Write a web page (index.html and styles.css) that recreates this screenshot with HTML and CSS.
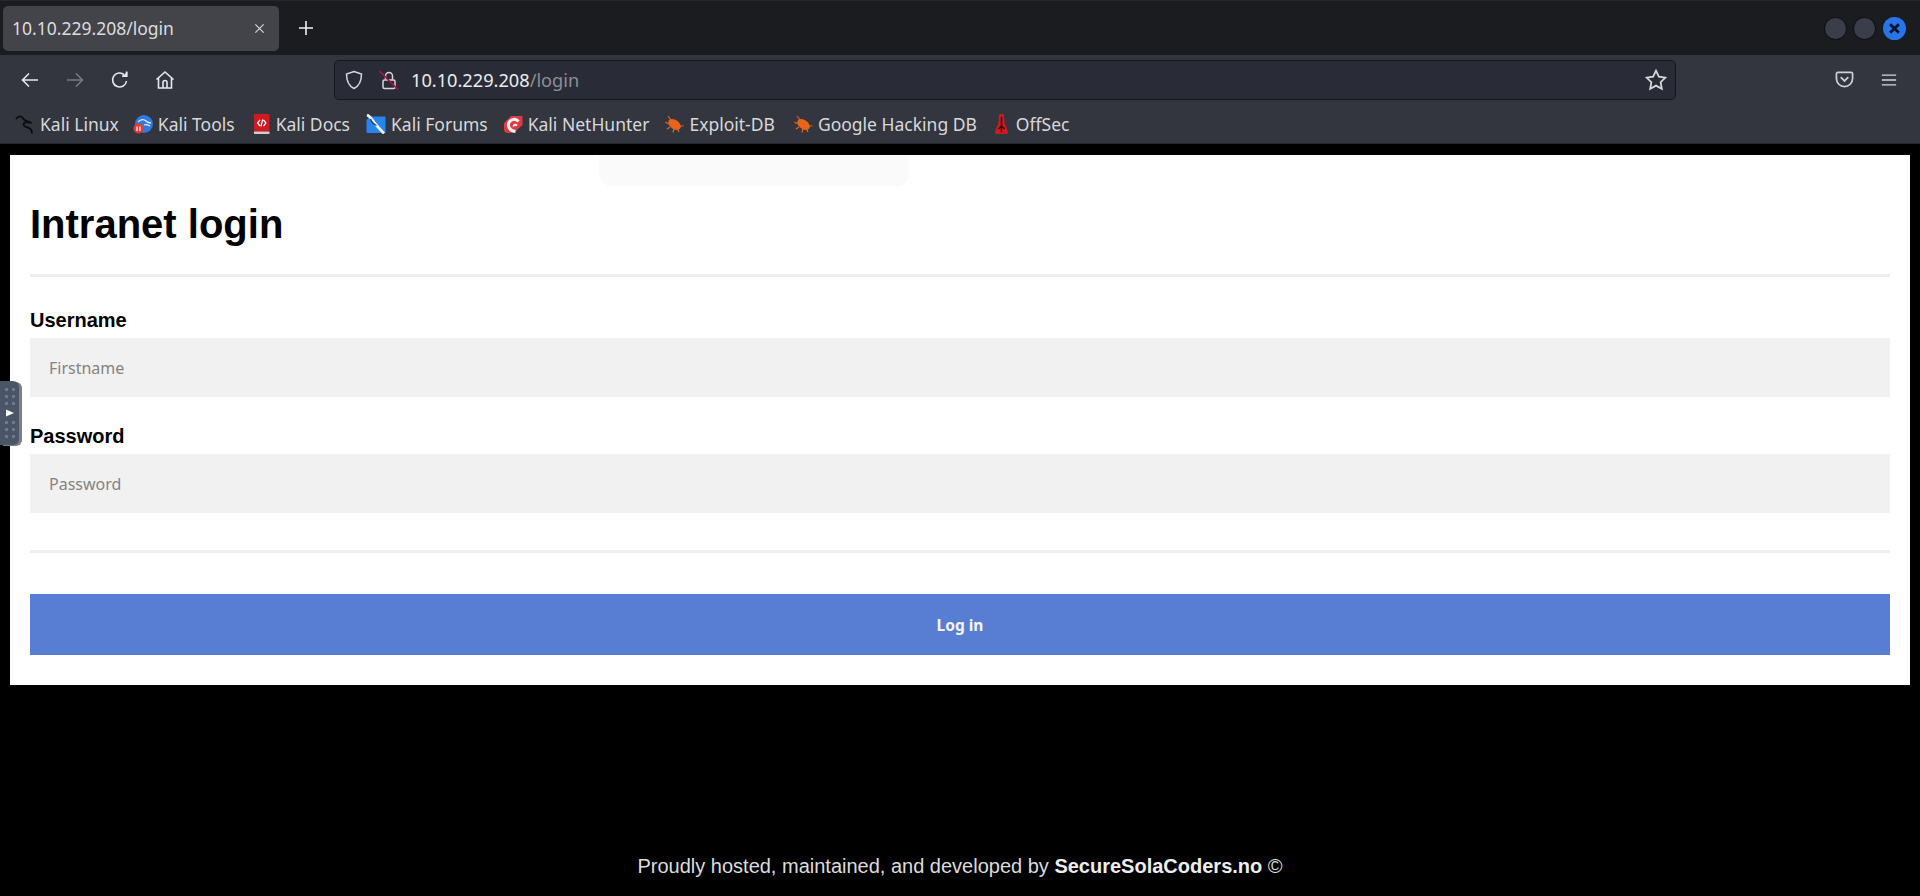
FILE: index.html
```html
<!DOCTYPE html>
<html lang="en">
<head>
<meta charset="utf-8">
<title>10.10.229.208/login</title>
<link rel="stylesheet" href="styles.css">
</head>
<body>
<header class="browser">
  <div class="tabbar">
    <div class="tab">
      <span class="tab-title">10.10.229.208/login</span>
      <svg class="tab-close" viewBox="0 0 12 12"><path d="M1.500 1.500l9 9M10.500 1.500l-9 9"/></svg>
    </div>
    <svg class="new-tab" viewBox="0 0 16 16"><path d="M8 1v14M1 8h14"/></svg>
    <div class="window-controls">
      <span class="win-btn"></span>
      <span class="win-btn"></span>
      <span class="win-btn win-close"><svg viewBox="0 0 12 12"><path d="M2 2l8 8M10 2l-8 8"/></svg></span>
    </div>
  </div>
  <div class="toolbar">
    <div class="nav">
      <svg class="nav-icon" viewBox="0 0 20 20"><path d="M18 10H3M9 3.500L2.500 10 9 16.500"/></svg>
      <svg class="nav-icon dim" viewBox="0 0 20 20"><path d="M2 10h15M11 3.500l6.500 6.500-6.500 6.500"/></svg>
      <svg class="nav-icon" viewBox="0 0 20 20"><path d="M16.500 11a7 7 0 1 1-2.300-6.300M16.500 1.500v4.500H12"/><path class="solid" d="M17.500 1.500v5.500H12z"/></svg>
      <svg class="nav-icon" viewBox="0 0 20 20"><path d="M1.500 9.500L10 2l8.500 7.500M3.500 8v10h13V8M8 18v-5.500a2 2 0 0 1 4 0V18"/></svg>
    </div>
    <div class="urlbar">
      <svg class="shield" viewBox="0 0 20 20"><path d="M10 1.500l7.500 2.500c0 7-1.500 11.500-7.500 14.500C4 15.500 2.500 11 2.500 4z"/></svg>
      <svg class="lock" viewBox="0 0 20 20"><path d="M6.500 9.500V6a3.500 3.500 0 0 1 7 0v3.500"/><rect x="4" y="10" width="12" height="8.500" rx="1.500"/><path class="strike" d="M0.500 1l18.500 18.500"/></svg>
      <span class="url"><span class="url-host">10.10.229.208</span>/login</span>
      <svg class="star" viewBox="0 0 20 20"><path d="M10 1.500l2.600 5.500 6 .8-4.400 4.200 1.100 6-5.300-2.900-5.300 2.900 1.100-6L1.400 7.800l6-.8z"/></svg>
    </div>
    <svg class="pocket" viewBox="0 0 20 20"><path d="M3 2.500h14a1.500 1.500 0 0 1 1.500 1.500v5a8.500 8.500 0 0 1-17 0V4A1.500 1.500 0 0 1 3 2.500z"/><path d="M6 7.500l4 4 4-4"/></svg>
    <svg class="menu" viewBox="0 0 18 14"><path d="M1 1.500h16M1 7h16M1 12.500h16"/></svg>
  </div>
  <nav class="bookmarks">
    <a class="bm bm-linux">
      <svg viewBox="0 0 20 20"><path class="dragon" d="M1 5C4 1 7 2 8.500 5c1 2 4 2 8 4-4-1-8-1-8 1.500 0 3 5.500 2 7.500 5 1 1.500 1 3 1 4"/></svg>
      <span>Kali Linux</span>
    </a>
    <a class="bm bm-tools">
      <svg viewBox="0 0 20 20"><circle cx="11" cy="10" r="9" fill="#2f79e0"/><path d="M5 8c3-3 6-3 8-1 1.500 1.500 3 2 5 2M11 11c2-1 4 0 6 1" fill="none" stroke="#dfeaf8" stroke-width="1.300"/><circle cx="5.500" cy="14.500" r="5" fill="#e63a35"/><path d="M4 12.500v4.500M7 12.500v4.500" stroke="#fff" stroke-width="1.200"/></svg>
      <span>Kali Tools</span>
    </a>
    <a class="bm bm-docs">
      <svg viewBox="0 0 17 20"><rect x="1" y="0" width="15.500" height="17.500" fill="#d01920" rx="1"/><rect x="1" y="17.500" width="15.500" height="2.500" fill="#d8c8cc"/><path d="M7 6l-2.500 3 2.500 3M10.500 6l2.500 3-2.500 3M9.700 5.500l-1.800 7" fill="none" stroke="#fff" stroke-width="1.200"/></svg>
      <span>Kali Docs</span>
    </a>
    <a class="bm bm-forums">
      <svg viewBox="0 0 20 20"><path d="M4 2.500h14.500a1 1 0 0 1 1 1V18a1 1 0 0 1-1 1H2a1.500 1.500 0 0 1-1.500-1.500V6z" fill="#2486ee"/><path d="M1 1c3 1 4 3 6 6 2 3 5 6 11 12.500" fill="none" stroke="#f2f2f2" stroke-width="2.800"/><path d="M4.500 5c1 3 3 5 6 6.500" fill="none" stroke="#27364e" stroke-width="1.300"/></svg>
      <span>Kali Forums</span>
    </a>
    <a class="bm bm-hunter">
      <svg viewBox="0 0 20 20"><path d="M8 2h10.500a1 1 0 0 1 1 1v8l-9 8H5a4 4 0 0 1-4-3.500V9z" fill="#e13a42"/><path d="M15.500 7.500C11.500 2.500 4.500 7 5.500 12c.6 3 3.500 5 7 5.500" fill="none" stroke="#f4f4f4" stroke-width="3"/><path d="M14 11.500c-2-1.500-3.500-.5-3.500 1" fill="none" stroke="#f4f4f4" stroke-width="2"/></svg>
      <span>Kali NetHunter</span>
    </a>
    <a class="bm bm-exploit">
      <svg viewBox="0 0 20 20"><use href="#bug"/></svg>
      <span>Exploit-DB</span>
    </a>
    <a class="bm bm-ghdb">
      <svg viewBox="0 0 20 20"><use href="#bug"/></svg>
      <span>Google Hacking DB</span>
    </a>
    <a class="bm bm-offsec">
      <svg viewBox="0 0 16 22"><path d="M5.500 0h5c.5 4 .5 7 1 10 .5 3 2.500 5 3.500 9 .3 1.500 0 3-1 3H2c-1 0-1.300-1.500-1-3 1-4 3-6 3.500-9 .5-3 .5-6 1-10z" fill="#cf1a20"/><path d="M8 3v17M4.500 16.500L8 13l3.500 3.500" fill="none" stroke="#4a0b0d" stroke-width="1.800"/></svg>
      <span>OffSec</span>
    </a>
    <svg class="defs" width="0" height="0"><defs><g id="bug"><ellipse cx="10.500" cy="10.500" rx="7" ry="4.500" transform="rotate(35 10.500 10.500)" fill="#e8641b"/><path d="M4 2l3 4M1.500 8l3 2M3 15l3-2M9 18.500l1-4M15 18l-1.500-3M19.500 12h-4" stroke="#e8641b" stroke-width="1.200" fill="none"/></g></defs></svg>
  </nav>
</header>

<main class="card">
  <h1 class="title">Intranet login</h1>
  <hr class="rule rule-top">
  <form class="form">
    <label class="field-label" for="username">Username</label>
    <input class="field-input" id="username" type="text" placeholder="Firstname">
    <label class="field-label field-label-second" for="password">Password</label>
    <input class="field-input" id="password" type="password" placeholder="Password">
    <hr class="rule rule-bottom">
    <button class="submit" type="button">Log in</button>
  </form>
  <div class="ghost-panel"></div>
</main>

<footer class="footer">Proudly hosted, maintained, and developed by <b class="footer-brand">SecureSolaCoders.no</b> ©</footer>

<aside class="handle">
  <span class="dots"><i></i><i></i><i></i><i></i><i></i><i></i></span>
  <svg class="play" viewBox="0 0 8 8"><path d="M0 .5L8 4 0 7.500z"/></svg>
  <span class="dots"><i></i><i></i><i></i><i></i><i></i><i></i></span>
</aside>
</body>
</html>
```

FILE: styles.css
```css
* { box-sizing: border-box; }

html, body {
  margin: 0;
  height: 896px;
  overflow: hidden;
}

body {
  background: #000;
  font-family: "Liberation Sans", Arial, sans-serif;
  display: flex;
  flex-direction: column;
}

svg { display: block; flex: none; }

/* Browser chrome */
.browser {
  font-family: "Noto Sans", sans-serif;
  color: #e6e6e8;
}

.tabbar {
  height: 55px;
  background: #1b1c20;
  border-top: 1px solid #26272b;
  display: flex;
  align-items: center;
  padding: 0 14px 0 3px;
}

.tab {
  width: 276px;
  height: 45px;
  background: #42444a;
  border-radius: 5px;
  display: flex;
  align-items: center;
  justify-content: space-between;
  padding: 0 14px 0 9px;
}

.tab-title { font-size: 17.500px; color: #dcdcde; }

.tab-close {
  width: 11px;
  height: 11px;
  fill: none;
  stroke: #d8d8da;
  stroke-width: 1.300;
}

.new-tab {
  width: 16px;
  height: 16px;
  margin-left: 19px;
  fill: none;
  stroke: #f2f2f3;
  stroke-width: 1.600;
}

.window-controls {
  margin-left: auto;
  display: flex;
  align-items: center;
  gap: 8px;
}

.win-btn {
  width: 21px;
  height: 21px;
  border-radius: 50%;
  background: #3a3e4b;
  box-shadow: 0 0 0 1px #111216;
}

.win-close {
  width: 23px;
  height: 23px;
  background: #2a74ea;
  display: flex;
  align-items: center;
  justify-content: center;
  box-shadow: none;
}

.win-close svg {
  width: 13px;
  height: 13px;
  fill: none;
  stroke: #07122c;
  stroke-width: 2.600;
}

.toolbar {
  height: 55px;
  background: #33363e;
  display: flex;
  align-items: center;
  padding: 0 18px 6px 20px;
}

.nav {
  display: flex;
  gap: 25px;
  width: 314px;
}

.nav-icon {
  width: 20px;
  height: 20px;
  fill: none;
  stroke: #e8e8ea;
  stroke-width: 1.600;
}

.nav-icon.dim { stroke: #777a80; }

.solid { fill: #e8e8ea; stroke: none; }

.urlbar {
  width: 1342px;
  height: 40px;
  background: #292c36;
  border: 1px solid #15161b;
  border-radius: 5px;
  display: flex;
  align-items: center;
  padding: 0 8px 0 9px;
}

.shield, .lock {
  width: 20px;
  height: 20px;
  fill: none;
  stroke: #d8d8da;
  stroke-width: 1.500;
}

.lock { margin-left: 15px; }

.strike { stroke: #a81440; stroke-width: 1.700; }

.url {
  margin-left: 12px;
  font-size: 18.200px;
  color: #8c8e95;
}

.url-host { color: #ececee; }

.star {
  margin-left: auto;
  width: 22px;
  height: 22px;
  fill: none;
  stroke: #d8d8da;
  stroke-width: 1.600;
}

.pocket {
  margin-left: 159px;
  width: 19px;
  height: 19px;
  fill: none;
  stroke: #cfcfd2;
  stroke-width: 1.800;
}

.menu {
  margin-left: 27px;
  width: 16px;
  height: 14px;
  fill: none;
  stroke: #d8d8da;
  stroke-width: 1.600;
}

.bookmarks {
  height: 34px;
  background: #33363e;
  border-bottom: 1px solid #24262c;
  display: flex;
  align-items: center;
  padding: 0 0 6px 15px;
  gap: 16px;
  font-size: 17.500px;
  color: #d8d8da;
}

.bm {
  display: flex;
  align-items: center;
  gap: 5px;
}

.bm svg { width: 20px; height: 20px; }

.bm-tools { margin: 0 2px 0 -2px; }

.bm-docs { gap: 6px; }

.bm-docs svg, .bm-offsec svg { width: 17px; }

.bm-hunter { margin: 0 1px 0 -1px; }

.bm-exploit { margin: 0 2px 0 -2px; }

.bm-offsec { gap: 6px; }

.dragon { fill: none; stroke: #0c0c0e; stroke-width: 1.800; }

.defs { position: absolute; }

/* Page */
.card {
  position: relative;
  margin: 11px 10px 0;
  height: 530px;
  background: #fff;
  padding: 0 20px;
  color: #000;
}

.title {
  margin: 0;
  padding-top: 46px;
  font-size: 40px;
  line-height: 46px;
  font-weight: 700;
}

.rule {
  margin: 0;
  height: 3px;
  border: 0;
  background: #eeeeee;
}

.rule-top { margin-top: 27px; }

.form { display: flex; flex-direction: column; }

.field-label {
  margin-top: 32px;
  font-size: 20px;
  line-height: 23px;
  font-weight: 700;
  margin-bottom: 6px;
}

.field-label-second { margin-top: 28px; }

.field-input {
  width: 100%;
  height: 59px;
  border: 0;
  background: #f1f1f1;
  padding: 0 19px;
  font-family: "Noto Sans", sans-serif;
  font-size: 16px;
  color: #000;
}

.field-input::placeholder { color: #838383; opacity: 1; }

.rule-bottom { margin-top: 37px; }

.submit {
  margin-top: 41px;
  height: 61px;
  border: 0;
  background: #587ed4;
  color: #f4f6fb;
  font-family: "Noto Sans", sans-serif;
  font-size: 15.500px;
  font-weight: 700;
}

.ghost-panel {
  position: absolute;
  left: 589px;
  top: 0;
  width: 310px;
  height: 31px;
  background: #fafafa;
  border-radius: 0 0 12px 12px;
}

.footer {
  margin-top: 170px;
  text-align: center;
  font-size: 20px;
  line-height: 23px;
  color: #dcdcdc;
}

.footer-brand { color: #eeeeee; }

/* Side handle overlay */
.handle {
  position: absolute;
  left: 0;
  top: 381px;
  width: 19px;
  height: 64px;
  background: #4a5568;
  border-radius: 0 6px 6px 0;
  box-shadow: 3px 1px 0 #7b7f85;
  display: flex;
  flex-direction: column;
  align-items: center;
  justify-content: center;
  gap: 4px;
}

.dots {
  display: grid;
  grid-template-columns: 3px 3px;
  gap: 4px;
}

.dots i { width: 3px; height: 3px; background: #6e7a8c; }

.play { width: 8px; height: 8px; fill: #fff; }
```
